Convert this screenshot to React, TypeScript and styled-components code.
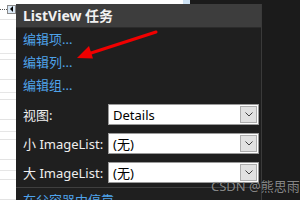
import * as React from 'react';
import styled, { createGlobalStyle } from 'styled-components';

const GlobalStyle = createGlobalStyle`
    html, body {
        margin: 0;
        padding: 0;
        background: #1b1b1b;
    }
`;

const Page = styled.div`
    position: relative;
    width: 300px;
    height: 200px;
    overflow: hidden;
    display: grid;
    grid-template-columns: 16px 246px 1fr;
    grid-template-rows: 4px 1fr;
    background: #1b1b1b;
    font-family: "Noto Sans", "Noto Sans CJK SC", sans-serif;
`;

const Designer = styled.div`
    grid-row: 1 / 3;
    grid-column: 1;
    background-color: #ffffff;
    background-image: repeating-linear-gradient(
        to bottom,
        transparent 0px,
        transparent 19px,
        #e3e3e3 19px,
        #e3e3e3 20px,
        transparent 20px,
        transparent 16.4px
    );
    display: flex;
    flex-direction: column;
    padding-top: 5px;
    box-sizing: border-box;
`;

const RowLines = styled.div`
    flex: 1;
    margin-top: 2px;
    background-image: repeating-linear-gradient(
        to bottom,
        transparent 0px,
        transparent 38px,
        #e6e6e6 38px,
        #e6e6e6 39px,
        transparent 39px,
        transparent 16.3px
    );
`;

const TagRow = styled.div`
    display: flex;
    align-items: center;
    height: 8px;
`;

const Dots = styled.div`
    width: 7px;
    border-top: 1px dotted #555;
`;

const TagButton = styled.div`
    width: 7px;
    height: 7px;
    border: 1px solid #8a8a8a;
    background: #dbe9f6;
    display: flex;
    align-items: center;
    justify-content: center;

    &::before {
        content: '';
        border-top: 3px solid transparent;
        border-bottom: 3px solid transparent;
        border-right: 3px solid #000;
    }
`;

const TopStrip = styled.div`
    grid-row: 1;
    grid-column: 2 / 4;
    display: flex;
`;

const Blank = styled.div<{ $w: number; $bg: string }>`
    width: ${p => p.$w}px;
    background: ${p => p.$bg};
`;

const Panel = styled.div`
    grid-row: 2;
    grid-column: 2;
    background: #1f1f1f;
    border-right: 1px solid #3a3a3a;
    display: flex;
    flex-direction: column;
`;

const Header = styled.div`
    height: 23px;
    flex-shrink: 0;
    background: #3d3d3d;
    border-bottom: 1px solid #2b2b2b;
    color: #f1f1f1;
    font-weight: bold;
    font-size: 14px;
    line-height: 23px;
    padding-left: 7px;
`;

const Link = styled.div`
    height: 23px;
    line-height: 23px;
    padding-left: 7px;
    font-size: 13px;
    color: #4fa3ea;
    flex-shrink: 0;
`;

const Props = styled.div`
    margin-top: 3px;
    display: flex;
    flex-direction: column;
`;

const PropRow = styled.div`
    height: 29px;
    display: flex;
    align-items: center;
    padding-left: 7px;
`;

const Label = styled.div`
    width: 85px;
    font-size: 13px;
    color: #eeeeee;
`;

const Select = styled.div`
    width: 151px;
    height: 21px;
    box-sizing: border-box;
    border: 1px solid #9a9a9a;
    background: #ffffff;
    display: flex;
    align-items: center;
    justify-content: space-between;
    padding: 0 1px 0 4px;
    font-size: 13px;
    color: #000;
`;

const DropButton = styled.div`
    width: 17px;
    height: 17px;
    box-sizing: border-box;
    border: 1px solid #adadad;
    background: #e1e1e1;
    display: flex;
    align-items: center;
    justify-content: center;
`;

const Footer = styled.div`
    border-top: 1px solid #3f3f3f;
    padding: 2px 0 0 7px;
    font-size: 13px;
    color: #4fa3ea;
    white-space: nowrap;
`;

const Watermark = styled.div`
    position: absolute;
    left: 211px;
    top: 176px;
    font-size: 13px;
    color: rgba(150, 150, 150, 0.9);
    text-shadow: 0 0 1px rgba(0, 0, 0, 0.3);
    white-space: nowrap;
`;

const Overlay = styled.svg`
    position: absolute;
    left: 0;
    top: 0;
    pointer-events: none;
`;

const Chevron: React.FC = () => (
    <svg width="8" height="5" viewBox="0 0 8 5">
        <path d="M0.5 0.5 L4 4 L7.5 0.5" fill="none" stroke="#404040" strokeWidth="1" />
    </svg>
);

const Field: React.FC<{ label: string; value: string }> = ({ label, value }) => (
    <PropRow>
        <Label>{label}</Label>
        <Select>
            <span>{value}</span>
            <DropButton><Chevron /></DropButton>
        </Select>
    </PropRow>
);

const App: React.FC = () => (
    <Page>
        <GlobalStyle />
        <Designer>
            <TagRow>
                <Dots />
                <TagButton />
            </TagRow>
            <RowLines />
        </Designer>
        <TopStrip>
            <Blank $w={167} $bg="#ffffff" />
            <Blank $w={7} $bg="#cfe3f5" />
        </TopStrip>
        <Panel>
            <Header>ListView 任务</Header>
            <Link>编辑项...</Link>
            <Link>编辑列...</Link>
            <Link>编辑组...</Link>
            <Props>
                <Field label="视图:" value="Details" />
                <Field label="小 ImageList:" value="(无)" />
                <Field label="大 ImageList:" value="(无)" />
            </Props>
            <Footer>在父容器中停靠</Footer>
        </Panel>
        <Overlay width="300" height="200" viewBox="0 0 300 200">
            <line x1="156" y1="32" x2="88" y2="54" stroke="#f00000" strokeWidth="3" strokeLinecap="round" />
            <polygon points="77,58 93,58.5 89,46" fill="#f00000" />
        </Overlay>
        <Watermark>CSDN @熊思雨</Watermark>
    </Page>
);

export default App;
